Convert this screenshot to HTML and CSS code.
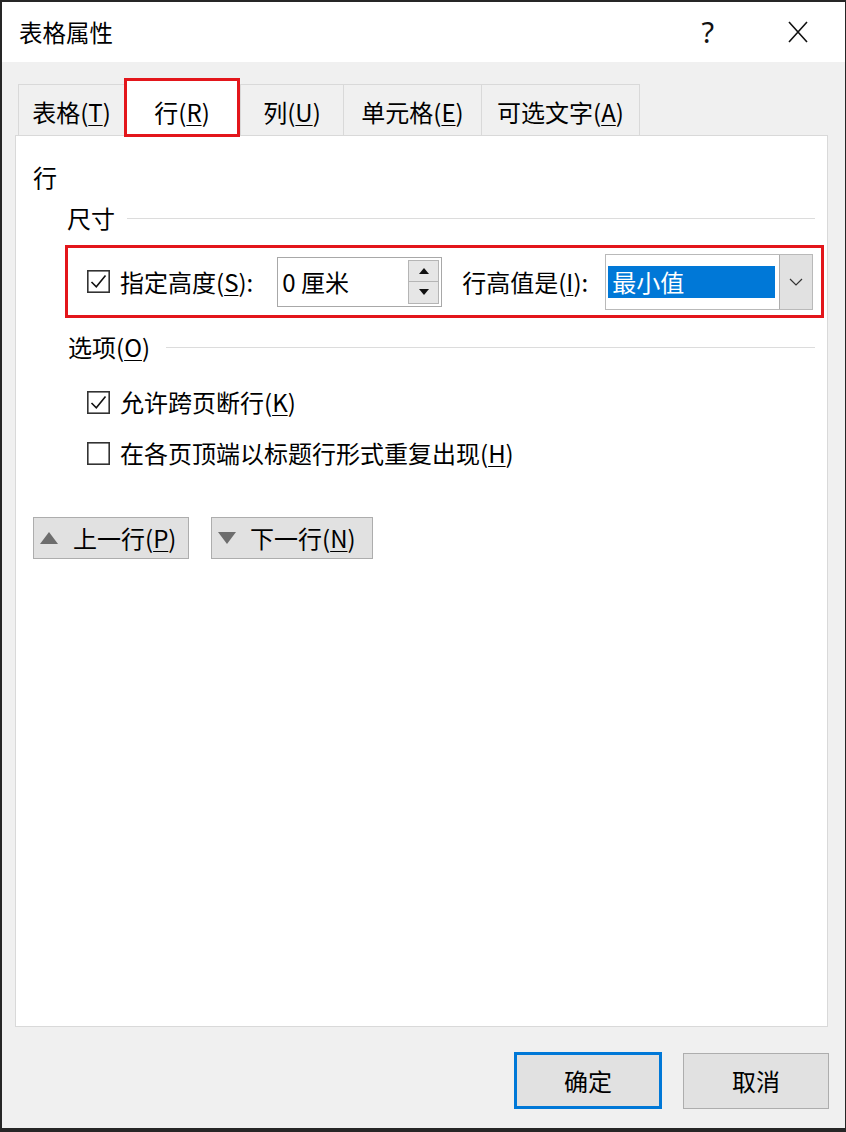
FILE: index.html
```html
<!DOCTYPE html>
<html lang="zh-CN">
<head>
<meta charset="utf-8">
<title>表格属性</title>
<link rel="stylesheet" href="styles.css">
</head>
<body>
<div class="dialog">
  <div class="titlebar">
    <span class="title">表格属性</span>
    <span class="help">?</span>
    <svg class="close" width="20" height="22" viewBox="0 0 20 22"><path d="M1 1 L19 21 M19 1 L1 21" stroke="#111" stroke-width="1.6" fill="none"/></svg>
  </div>
  <div class="tabs">
    <div class="tab tab-table">表格(<u>T</u>)</div>
    <div class="tab tab-row active">行(<u>R</u>)</div>
    <div class="tab tab-col">列(<u>U</u>)</div>
    <div class="tab tab-cell">单元格(<u>E</u>)</div>
    <div class="tab tab-alt">可选文字(<u>A</u>)</div>
  </div>
  <div class="panel">
    <div class="section-title">行</div>
    <div class="group-head"><span>尺寸</span><span class="rule"></span></div>
    <div class="size-box">
      <svg class="checkbox" width="23" height="23" viewBox="0 0 23 23"><rect x="0.8" y="0.8" width="21.4" height="21.4" fill="#fff" stroke="#333" stroke-width="1.6"/><path d="M4.5 12 L9.3 16.8 L18.5 5.5" stroke="#111" stroke-width="1.6" fill="none"/></svg>
      <span class="label first-label">指定高度(<u>S</u>):</span>
      <div class="spin">
        <span class="spin-value">0 厘米</span>
        <div class="spin-btns">
          <div class="spin-btn"><svg width="10" height="6" viewBox="0 0 10 6"><path d="M0 6 L5 0 L10 6 Z" fill="#111"/></svg></div>
          <div class="spin-btn"><svg width="10" height="6" viewBox="0 0 10 6"><path d="M0 0 L5 6 L10 0 Z" fill="#111"/></svg></div>
        </div>
      </div>
      <span class="label second-label">行高值是(<u>I</u>):</span>
      <div class="combo">
        <span class="combo-value">最小值</span>
        <div class="combo-drop"><svg width="14" height="8" viewBox="0 0 14 8"><path d="M1 1 L7 7 L13 1" stroke="#333" stroke-width="1.2" fill="none"/></svg></div>
      </div>
    </div>
    <div class="group-head group-options"><span>选项(<u>O</u>)</span><span class="rule"></span></div>
    <div class="check-row first-check">
      <svg class="checkbox" width="23" height="23" viewBox="0 0 23 23"><rect x="0.8" y="0.8" width="21.4" height="21.4" fill="#fff" stroke="#333" stroke-width="1.6"/><path d="M4.5 12 L9.3 16.8 L18.5 5.5" stroke="#111" stroke-width="1.6" fill="none"/></svg>
      <span class="label">允许跨页断行(<u>K</u>)</span>
    </div>
    <div class="check-row second-check">
      <svg class="checkbox" width="23" height="23" viewBox="0 0 23 23"><rect x="0.8" y="0.8" width="21.4" height="21.4" fill="#fff" stroke="#333" stroke-width="1.6"/></svg>
      <span class="label">在各页顶端以标题行形式重复出现(<u>H</u>)</span>
    </div>
    <div class="nav-buttons">
      <div class="btn btn-prev"><svg width="18" height="12" viewBox="0 0 18 12"><path d="M0 12 L9 0 L18 12 Z" fill="#6d6d6d"/></svg><span>上一行(<u>P</u>)</span></div>
      <div class="btn btn-next"><svg width="18" height="12" viewBox="0 0 18 12"><path d="M0 0 L9 12 L18 0 Z" fill="#6d6d6d"/></svg><span>下一行(<u>N</u>)</span></div>
    </div>
  </div>
  <div class="footer">
    <div class="dlg-btn ok">确定</div>
    <div class="dlg-btn cancel">取消</div>
  </div>
</div>
</body>
</html>
```

FILE: styles.css
```css
html, body {
  margin: 0;
  padding: 0;
}
body {
  background: #262626;
  font-family: "Noto Sans CJK SC", "Noto Sans", sans-serif;
  color: #000;
  width: 846px;
  height: 1132px;
  overflow: hidden;
}
u {
  text-decoration: underline;
  text-decoration-thickness: 1px;
  text-underline-offset: 3px;
}
.dialog {
  margin: 2px 1px 0 2px;
  width: 843px;
  height: 1126px;
  background: #f0f0f0;
  display: flex;
  flex-direction: column;
}
.titlebar {
  flex: none;
  height: 60px;
  background: #fff;
  display: flex;
  align-items: center;
}
.title {
  margin-left: 17px;
  font-size: 23.5px;
  line-height: 32px;
}
.help {
  margin-left: auto;
  margin-right: 74px;
  font-family: "Noto Sans", sans-serif;
  font-size: 29px;
  line-height: 32px;
  color: #111;
}
.close {
  margin-right: 37px;
  display: block;
}
.tabs {
  flex: none;
  display: flex;
  align-items: flex-end;
  margin: 16px 0 0 16px;
  height: 57px;
  position: relative;
  z-index: 1;
}
.tab {
  box-sizing: border-box;
  height: 51px;
  border: 1px solid #d9d9d9;
  border-right: none;
  border-bottom: none;
  background: #f0f0f0;
  font-size: 24px;
  line-height: 32px;
  display: flex;
  justify-content: center;
  align-items: center;
  padding-top: 4px;
  white-space: nowrap;
}
.tab.active {
  height: 59px;
  margin-bottom: -2px;
  background: #fff;
  border: 3px solid #e3161b;
  padding-top: 8px;
}
.tab-table { width: 106px; }
.tab-row { width: 116px; }
.tab-col { width: 103px; }
.tab-cell { width: 138px; }
.tab-alt { width: 159px; border-right: 1px solid #d9d9d9; }
.panel {
  flex: none;
  box-sizing: border-box;
  margin-left: 13px;
  width: 813px;
  height: 892px;
  border: 1px solid #d9d9d9;
  background: #fff;
  display: flex;
  flex-direction: column;
}
.section-title {
  margin: 25px 0 0 17px;
  font-size: 24px;
  line-height: 32px;
}
.group-head {
  display: flex;
  align-items: center;
  margin: 9px 12px 0 51px;
  height: 32px;
  font-size: 24px;
  line-height: 32px;
}
.group-head .rule {
  flex: 1;
  height: 1px;
  background: #dcdcdc;
  margin-left: 12px;
}
.group-options {
  margin: 13px 12px 0 52px;
}
.group-options .rule {
  margin-left: 16px;
}
.size-box {
  box-sizing: border-box;
  margin: 11px 3px 0 49px;
  height: 73px;
  border: 3px solid #e3161b;
  display: flex;
  align-items: center;
  padding-left: 19px;
}
.checkbox {
  display: block;
  flex: none;
}
.label {
  font-size: 24px;
  line-height: 32px;
  white-space: nowrap;
}
.first-label {
  margin-left: 10px;
}
.spin {
  box-sizing: border-box;
  margin-left: 24px;
  width: 165px;
  height: 50px;
  border: 1px solid #a8a8a8;
  background: #fff;
  display: flex;
  align-items: center;
}
.spin-value {
  flex: 1;
  padding-left: 4px;
  font-size: 24px;
  line-height: 32px;
}
.spin-btns {
  display: flex;
  flex-direction: column;
  margin-right: 2px;
  width: 31px;
  height: 44px;
}
.spin-btn {
  box-sizing: border-box;
  flex: 1;
  border: 1px solid #b5b5b5;
  background: #e6e6e6;
  display: flex;
  align-items: center;
  justify-content: center;
}
.spin-btn + .spin-btn {
  border-top: none;
}
.second-label {
  margin-left: 20px;
}
.combo {
  box-sizing: border-box;
  margin-left: 17px;
  width: 208px;
  height: 56px;
  border: 1px solid #b9b9b9;
  background: #fff;
  display: flex;
}
.combo-value {
  flex: 1;
  margin: 11px 4px 11px 2px;
  background: #0078d7;
  color: #fff;
  font-size: 24px;
  line-height: 32px;
  padding-left: 4px;
}
.combo-drop {
  box-sizing: border-box;
  width: 33px;
  border-left: 1px solid #adadad;
  background: #e1e1e1;
  display: flex;
  align-items: center;
  justify-content: center;
}
.check-row {
  display: flex;
  align-items: center;
  gap: 10px;
  height: 32px;
  margin-left: 71px;
}
.first-check {
  margin-top: 23px;
}
.second-check {
  margin-top: 19px;
}
.nav-buttons {
  display: flex;
  gap: 22px;
  margin: 48px 0 0 17px;
}
.btn {
  box-sizing: border-box;
  height: 42px;
  border: 1px solid #adadad;
  background: #e1e1e1;
  display: flex;
  align-items: center;
  padding-left: 6px;
  gap: 14px;
  font-size: 24px;
  line-height: 32px;
}
.btn svg {
  display: block;
}
.btn-prev { width: 156px; gap: 15px; }
.btn-next { width: 162px; }
.footer {
  flex: none;
  display: flex;
  justify-content: flex-end;
  align-items: flex-start;
  margin: 25px 16px 0 0;
}
.dlg-btn {
  box-sizing: border-box;
  display: flex;
  align-items: center;
  justify-content: center;
  background: #e1e1e1;
  font-size: 24px;
  line-height: 32px;
}
.ok {
  width: 148px;
  height: 57px;
  border: 3px solid #0078d7;
  margin-right: 21px;
}
.cancel {
  width: 146px;
  height: 56px;
  border: 1px solid #adadad;
  margin-top: 1px;
}
```
